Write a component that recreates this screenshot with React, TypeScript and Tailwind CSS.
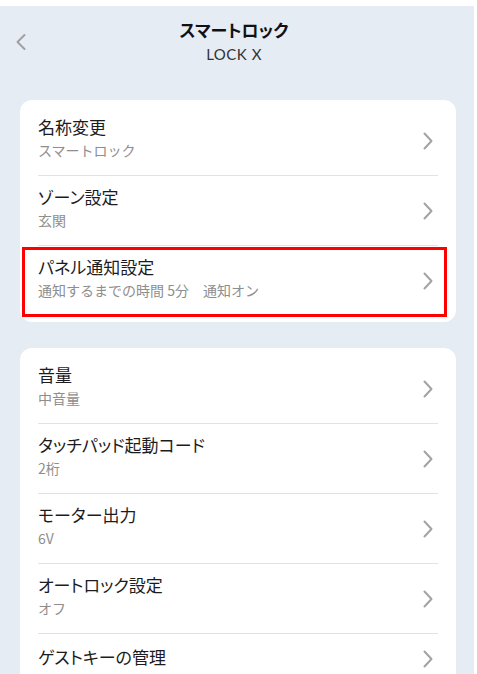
import React from "react";

const jp = { fontFamily: '"Noto Sans CJK JP", "Noto Sans", sans-serif' };

function Chevron() {
  return (
    <svg width="12" height="20" viewBox="0 0 12 20" fill="none" className="shrink-0">
      <path d="M2.5 2.5 L9.5 10 L2.5 17.5" stroke="#a3a3a3" strokeWidth="2" strokeLinecap="round" strokeLinejoin="round" />
    </svg>
  );
}

type Item = { title: string; sub: string; highlight?: boolean };

function Row({ item, last }: { item: Item; last: boolean }) {
  const hasSub = item.sub !== "";
  return (
    <div className={`relative px-[18px] ${hasSub ? "h-[70px]" : "h-[50px]"}`}>
      <div className={`flex h-full items-center ${last ? "" : "border-b border-[#e2e2e2]"}`}>
        <div className={`flex flex-1 flex-col ${hasSub ? "-mt-[6px]" : "-mt-[4px]"}`}>
          <span className="text-[17px] leading-[24px] text-[#1c1c1e] [font-feature-settings:'palt']">{item.title}</span>
          {hasSub && <span className="text-[14px] leading-[22px] text-[#8e8e8e]">{item.sub}</span>}
        </div>
        <div className="pr-[4px]">
          <Chevron />
        </div>
      </div>
      {item.highlight && (
        <div className="pointer-events-none absolute left-[2px] right-[9px] top-[1px] bottom-[-1px] border-[3px] border-[#ff0000]" />
      )}
    </div>
  );
}

function Card({ items }: { items: Item[] }) {
  return (
    <div className="rounded-[12px] bg-white pt-[6px] pb-[6px]">
      {items.map((it, i) => (
        <Row key={i} item={it} last={i === items.length - 1} />
      ))}
    </div>
  );
}

export default function App() {
  const card1: Item[] = [
    { title: "名称変更", sub: "スマートロック" },
    { title: "ゾーン設定", sub: "玄関" },
    { title: "パネル通知設定", sub: "通知するまでの時間 5分\u3000通知オン", highlight: true },
  ];
  const card2: Item[] = [
    { title: "音量", sub: "中音量" },
    { title: "タッチパッド起動コード", sub: "2桁" },
    { title: "モーター出力", sub: "6V" },
    { title: "オートロック設定", sub: "オフ" },
    { title: "ゲストキーの管理", sub: "" },
  ];
  return (
    <div className="h-[674px] w-[477px] overflow-hidden bg-white pt-[6px] pr-[3px]" style={jp}>
      <div className="h-full bg-[#e6ecf4] px-[20px] pr-[18px]">
        <div className="relative flex h-[94px] flex-col items-center pt-[11px] pr-[8px]">
          <div className="absolute left-[-6px] top-[26px]">
            <svg width="14" height="20" viewBox="0 0 14 20" fill="none">
              <path d="M10.5 3 L3.5 10 L10.5 17" stroke="#a0a0a0" strokeWidth="2" strokeLinecap="round" strokeLinejoin="round" />
            </svg>
          </div>
          <span className="text-[17px] font-bold leading-[26px] text-[#111] [font-feature-settings:'palt']">スマートロック</span>
          <span className="mt-[1px] text-[15px] leading-[20px] tracking-[0.5px] text-[#333]" style={{ fontFamily: "Lato, sans-serif" }}>
            LOCK X
          </span>
        </div>
        <Card items={card1} />
        <div className="h-[26px]" />
        <Card items={card2} />
      </div>
    </div>
  );
}
